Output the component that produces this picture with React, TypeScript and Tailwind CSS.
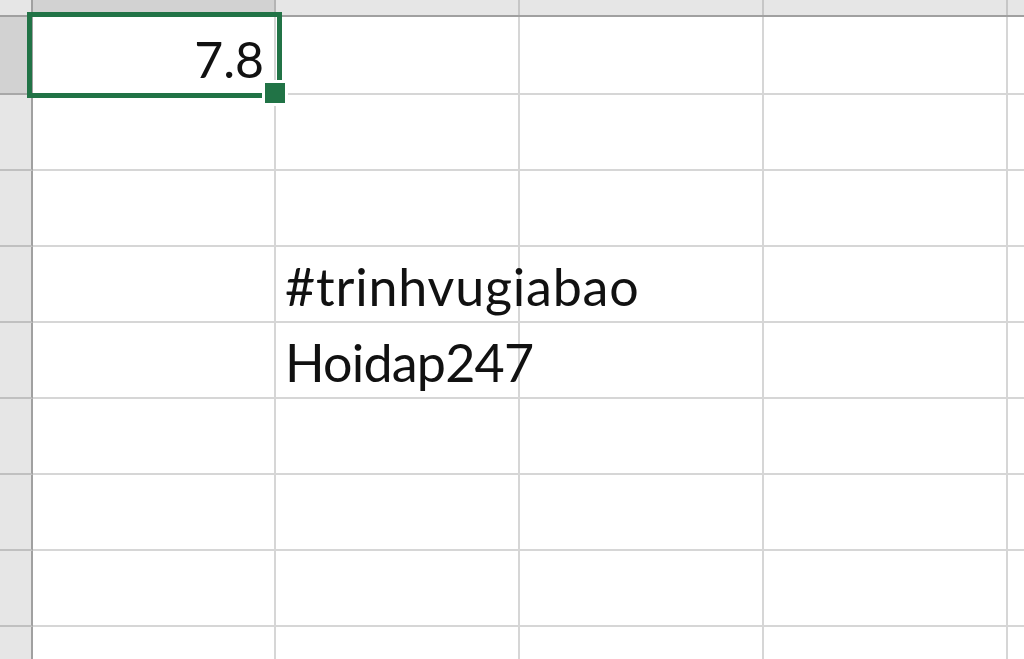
import React from 'react'

const COLS = 5
const ROWS = 9

// text placed in cells, keyed by "row-col"
const cellText: Record<string, { text: string; cls: string }> = {
    '0-0': { text: '7.8', cls: 'right-[10px] text-[50px]' },
    '3-1': { text: '#trinhvugiabao', cls: 'left-[9px] text-[52px] tracking-[0.8px]' },
    '4-1': { text: 'Hoidap247', cls: 'left-[9px] text-[52px] tracking-[-0.8px]' },
}

const App: React.FC = () => {
    return (
        <div className="relative w-[1024px] h-[659px] overflow-hidden bg-white font-['Lato',sans-serif] text-[#111]">
            {/* column headers */}
            <div className="flex h-[17px] border-b-2 border-[#a0a0a0] bg-[#e6e6e6]">
                <div className="w-[33px] shrink-0 border-r-2 border-[#a0a0a0] bg-[#e6e6e6]" />
                <div className="w-[243px] shrink-0 border-r-2 border-[#b4b4b4] bg-[#d2d2d2]" />
                <div className="w-[244px] shrink-0 border-r-2 border-[#c6c6c6]" />
                <div className="w-[244px] shrink-0 border-r-2 border-[#c6c6c6]" />
                <div className="w-[244px] shrink-0 border-r-2 border-[#c6c6c6]" />
                <div className="flex-1" />
            </div>

            {/* rows */}
            {Array.from({ length: ROWS }).map((_, r) => (
                <div key={r} className={`flex ${r === 0 ? 'h-[78px]' : 'h-[76px]'}`}>
                    <div
                        className={`w-[33px] shrink-0 border-r-2 border-b-2 border-r-[#a0a0a0] ${
                            r === 0 ? 'bg-[#d2d2d2] border-b-[#a8a8a8]' : 'bg-[#e6e6e6] border-b-[#c0c0c0]'
                        }`}
                    />
                    {Array.from({ length: COLS }).map((_, c) => {
                        const item = cellText[`${r}-${c}`]
                        return (
                            <div
                                key={c}
                                className={`relative shrink-0 border-b-2 border-r-2 border-[#d6d6d6] ${
                                    c === 0 ? 'w-[243px]' : 'w-[244px]'
                                }`}
                            >
                                {item && (
                                    <div className={`absolute bottom-[9px] whitespace-nowrap leading-none ${item.cls}`}>
                                        {item.text}
                                    </div>
                                )}
                            </div>
                        )
                    })}
                </div>
            ))}

            {/* active cell selection */}
            <div className="absolute left-[27px] top-[12px] w-[255px] h-[86px] border-[5px] border-[#217346]" />
            <div className="absolute left-[262px] top-[80px] w-[26px] h-[26px] border-[3px] border-white bg-[#217346]" />
        </div>
    )
}

export default App
